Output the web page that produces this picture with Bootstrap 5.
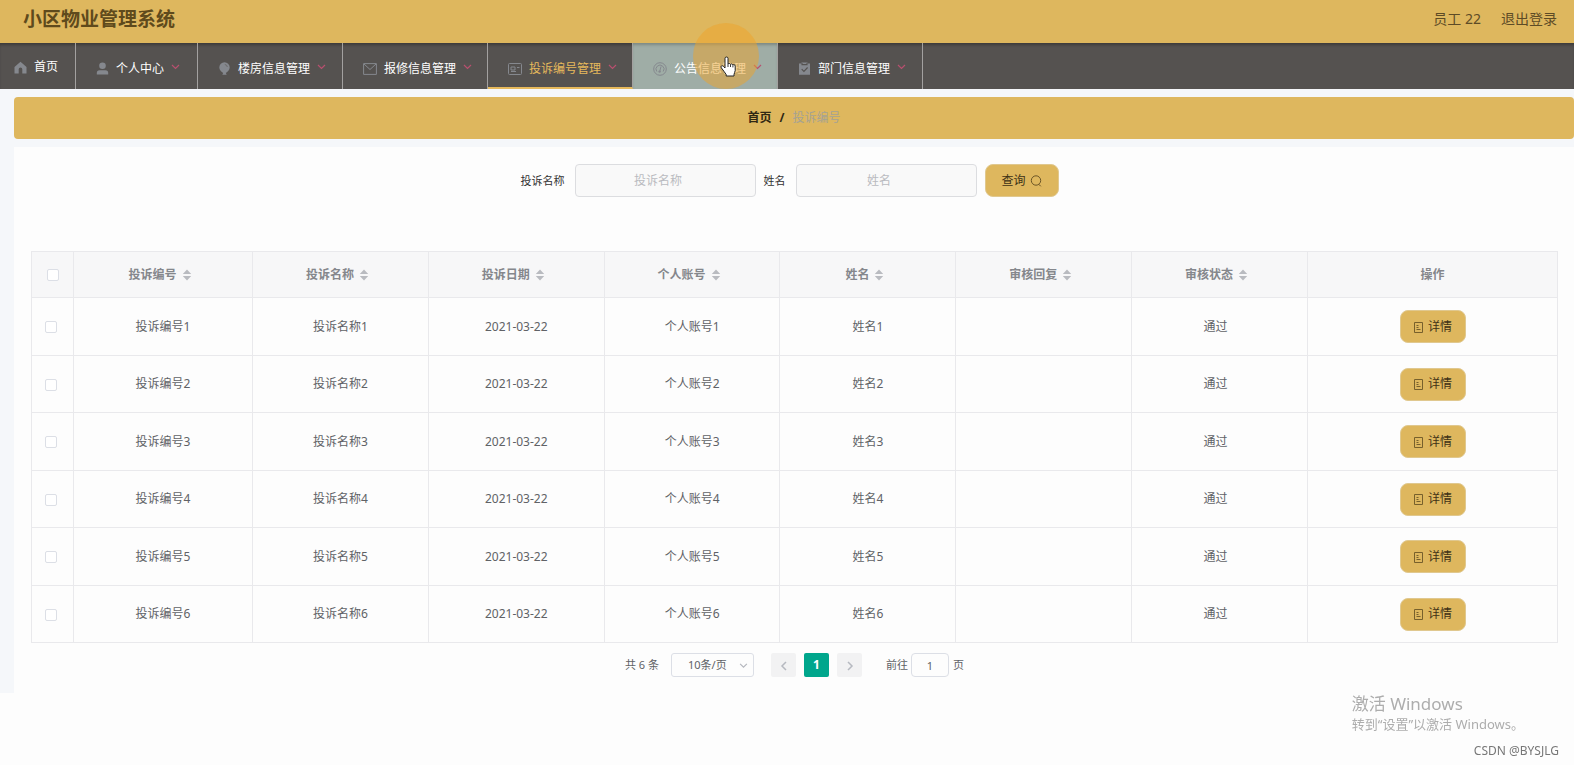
<!DOCTYPE html>
<html lang="zh-CN">
<head>
<meta charset="utf-8">
<meta name="viewport" content="width=device-width, initial-scale=1">
<title>小区物业管理系统</title>
<link rel="stylesheet" href="https://cdn.jsdelivr.net/npm/bootstrap@5.3.0/dist/css/bootstrap.min.css">
<style>
  :root { --gold: #deb75e; --slate: #555250; --line: #e9e9ec; }
  body { font-family: "Noto Sans", "Noto Sans CJK SC", sans-serif; font-size: 12px; line-height: 18px; color: #606266; background: #fdfdfd; }
  a { text-decoration: none; }
  .topbar { height: 43px; padding: 0 17px 5px 23px; background: var(--gold); }
  .brand-title { font-size: 19px; line-height: 28px; font-weight: 700; color: #5f4a1c; }
  .top-link { font-size: 14px; color: #5d4b26; }
  .main-menu { height: 46px; background: var(--slate); box-shadow: inset 0 3px 3px -1px #3d3b3a; }
  .menu-item { width: 145px; padding: 5px 17px 0 20px; color: #fff; border-right: 1px solid #a3a1a0; white-space: nowrap; }
  .menu-item span { margin-left: 7px; }
  .menu-item .caret { margin: 0 0 3px 7px; }
  .menu-item.home { width: 76px; padding: 2px 0 0 14px; }
  .menu-item.person { width: 122px; }
  .menu-item.current { color: #e6b95c; border-bottom: 2px solid #e6b95c; padding-top: 7px; }
  .menu-item.hovered { background: #9fada6; box-shadow: inset 0 3px 3px -1px #7d8983; }
  .menu-item svg { flex: none; }
  .click-halo { width: 66px; height: 66px; left: 60px; top: -20px; border-radius: 50%; background: rgba(238, 164, 42, .5); pointer-events: none; }
  .hand { left: 87px; top: 13px; }
  .page-area { background: #f5f7fa; padding: 8px 0 0 14px; }
  .crumb-bar { height: 42px; border-radius: 4px; background: var(--gold); }
  .crumb-home { color: #302713; font-weight: 700; }
  .crumb-here { color: #a5a294; }
  .panel { background: #fdfdfd; margin-top: 8px; padding: 17px 16px 16px 17px; }
  .search-row { height: 33px; margin-bottom: 54px; padding-right: 10px; }
  .search-row label { font-size: 11px; color: #333; }
  .search-row .form-control { width: 181px; height: 33px; font-size: 12px; text-align: center; background: #f9f9f9; border: 1px solid #dcdde0; border-radius: 4px; padding: 0 29px 0 15px; margin: 0 8px 0 10px; }
  .form-control::placeholder { color: #b9bbc0; opacity: 1; }
  .btn-gold { height: 33px; font-size: 12px; line-height: 18px; padding: 0 12px; border: 1px solid #e0c88f; border-radius: 8px; background: var(--gold); color: #3f3216; }
  .btn-gold:hover { background: #d3aa4d; border-color: #d3aa4d; }
  .btn-query { width: 74px; }
  .btn-detail { width: 66px; padding: 0; }
  .data-grid { table-layout: fixed; border: 1px solid var(--line); margin: 0; text-align: center; --bs-table-bg: transparent; --bs-table-color: #606266; color: #606266; }
  .data-grid > :not(caption) > * { border-width: 0; }
  .data-grid > :not(caption) > * > * { border: 1px solid var(--line); padding: 0; vertical-align: middle; }
  .data-grid thead th { height: 46px; background: #f7f7f8; color: #85878c; font-weight: 700; }
  .data-grid thead .sortable { padding-right: 6px; }
  .data-grid tbody .state { padding-right: 8px; }
  .data-grid tbody tr { height: 58px; }
  .data-grid tbody tr:nth-child(even) { height: 57px; }
  .col-tick { width: 42px; }
  .col-id { width: 179px; }
  .col-act { width: 250px; }
  .data-grid .form-check-input { width: 12px; height: 12px; margin: 0 3px 0 0; border: 1px solid #dcdfe6; border-radius: 2px; vertical-align: middle; }
  .data-grid th .form-check-input { margin: 0; }
  .sorter { margin-left: 5px; vertical-align: -2px; }
  .pager { margin-top: 10px; font-size: 11px; height: 24px; }
  .pager .form-select { width: 83px; height: 24px; font-size: 11px; line-height: 16px; padding: 0 20px 0 16px; border: 1px solid #dcdfe6; border-radius: 3px; color: #606266; background-color: transparent; background-position: right 5px center; background-size: 9px; margin: 0 17px 0 12px;
    background-image: url("data:image/svg+xml,%3csvg xmlns='http://www.w3.org/2000/svg' viewBox='0 0 16 16'%3e%3cpath fill='none' stroke='%23b4b7be' stroke-width='2' d='m2 5 6 6 6-6'/%3e%3c/svg%3e"); }
  .page-btn { width: 25px; height: 24px; padding: 0; border: 0; border-radius: 2px; background: #f2f2f3; color: #b6b9c0; font-size: 12px; font-weight: 700; line-height: 24px; }
  .page-btn.on { background: #00a68c; color: #fff; margin: 0 8px; }
  .pager .form-control { width: 38px; height: 24px; padding: 0; text-align: center; font-size: 11px; border: 1px solid #dcdfe6; border-radius: 4px; color: #606266; background: transparent; margin: 0 4px 0 3px; }
  .jump { margin-left: 24px; }
  .os-note { right: 50px; bottom: 31px; color: #adadad; font-size: 13px; line-height: 20px; pointer-events: none; }
  .os-note .title-line { font-size: 17px; }
  .credit { right: 15px; bottom: 5px; color: #777; font-size: 12px; }
</style>
</head>
<body>
<svg class="d-none" xmlns="http://www.w3.org/2000/svg">
  <symbol id="caret" viewBox="0 0 9 6"><path d="m1 1 3.500 3.500L8 1" fill="none" stroke="#b8506f" stroke-width="1.200"/></symbol>
  <symbol id="sort" viewBox="0 0 10 12"><path d="M5 .5 9.200 5H.8zM5 11.500.8 7h8.400z" fill="#b9bbc0"/></symbol>
  <symbol id="doc" viewBox="0 0 11 11"><path d="M1.500.5h8v10h-8zM3.500 3.500h2M3.500 5.500h2M3.500 7.500h4" fill="none" stroke="#77602c" stroke-width="1"/></symbol>
</svg>

<header class="topbar d-flex align-items-center justify-content-between">
  <h1 class="brand-title m-0">小区物业管理系统</h1>
  <div class="d-flex gap-3">
    <span class="top-link me-1">员工 22</span>
    <a class="top-link" href="#">退出登录</a>
  </div>
</header>

<nav class="main-menu d-flex">
  <a class="menu-item home d-flex align-items-center" href="#"><svg width="13" height="13" viewBox="0 0 13 13"><path d="M6.500.8 12.500 6v6.500H8.300V8.300a1.800 1.800 0 0 0-3.600 0v4.200H.5V6z" fill="#85888e"/></svg><span>首页</span></a>
  <a class="menu-item person d-flex align-items-center" href="#"><svg width="13" height="13" viewBox="0 0 13 13"><circle cx="6.500" cy="3.700" r="3.300" fill="#85888e"/><path d="M.8 12.500V11q0-2.800 2.800-2.800h5.800q2.800 0 2.800 2.800v1.500z" fill="#85888e"/></svg><span>个人中心</span><svg class="caret" width="9" height="6"><use href="#caret"/></svg></a>
  <a class="menu-item d-flex align-items-center" href="#"><svg width="13" height="13" viewBox="0 0 13 13"><path d="M6.500.3A5.200 5.200 0 0 1 11.700 5.500C11.700 8 9.500 10 7.800 11l.9 1.700H4.300L5.200 11C3.500 10 1.300 8 1.300 5.500A5.200 5.200 0 0 1 6.500.3z" fill="#85888e"/><path d="M6.800 2.500q2.300.2 2.500 2.500" fill="none" stroke="#6b6a6a"/></svg><span>楼房信息管理</span><svg class="caret" width="9" height="6"><use href="#caret"/></svg></a>
  <a class="menu-item d-flex align-items-center" href="#"><svg width="14" height="12" viewBox="0 0 14 12"><path d="M.6.600h12.800v10.800H.6zM1 1l6 5.500L13 1" fill="none" stroke="#85888e"/></svg><span>报修信息管理</span><svg class="caret" width="9" height="6"><use href="#caret"/></svg></a>
  <a class="menu-item current d-flex align-items-center" href="#"><svg width="14" height="12" viewBox="0 0 14 12"><rect x=".5" y=".5" width="13" height="11" rx="1" fill="none" stroke="#85888e"/><path d="M3 4h4v3H3zM9 4.500h2.500M3 8.500h5" fill="none" stroke="#85888e"/></svg><span>投诉编号管理</span><svg class="caret" width="9" height="6"><use href="#caret"/></svg></a>
  <a class="menu-item hovered position-relative d-flex align-items-center" href="#"><svg width="14" height="14" viewBox="0 0 14 14"><circle cx="7" cy="7" r="6.300" fill="none" stroke="#85888e"/><path d="M3.800 9.500a4 4 0 1 1 6.400 0M6.700 9.500 8 4.500" fill="none" stroke="#85888e"/><circle cx="6.600" cy="9.600" r="1.200" fill="#85888e"/></svg><span>公告信息管理</span><svg class="caret" width="9" height="6"><use href="#caret"/></svg>
    <i class="click-halo position-absolute"></i>
    <svg class="hand position-absolute" width="17" height="21" viewBox="0 0 17 21"><path d="M5 2.500a1.500 1.500 0 0 1 3 0V8c.4-.8 2.300-.7 2.500.4.500-.9 2.200-.6 2.400.6.600-.7 2.300-.4 2.300 1.200v4.300c0 1.500-1.200 2.500-1.200 4V20H6.200v-1.500C5 16.500 3 14.200 1.300 11.800.3 10.200 2 9 3.300 10.300L5 12z" fill="#fff" stroke="#222" stroke-width="1" stroke-linejoin="round"/><path d="M8 8v3M10.500 8.500V11M12.900 9.200v2.200" stroke="#222" stroke-width=".9"/></svg>
  </a>
  <a class="menu-item d-flex align-items-center" href="#"><svg width="13" height="13" viewBox="0 0 13 13"><path d="M1 1.500h2.500V.5h6v1H12v11.300H1z" fill="#85888e"/><path d="M4 .9v1.700h5V.9M3.700 7.200l2.200 2.200 3.700-3.900" fill="none" stroke="#555250" stroke-width="1.100"/></svg><span>部门信息管理</span><svg class="caret" width="9" height="6"><use href="#caret"/></svg></a>
</nav>

<main class="page-area">
  <nav class="crumb-bar d-flex align-items-center justify-content-center gap-2">
    <a class="crumb-home" href="#">首页</a><span class="crumb-home">/</span><span class="crumb-here">投诉编号</span>
  </nav>

  <section class="panel">
    <form class="search-row d-flex align-items-center justify-content-center">
      <label for="q-title">投诉名称</label>
      <input id="q-title" class="form-control" type="text" placeholder="投诉名称">
      <label for="q-name">姓名</label>
      <input id="q-name" class="form-control" type="text" placeholder="姓名">
      <button type="button" class="btn btn-gold btn-query d-flex align-items-center justify-content-center gap-1">查询<svg width="12" height="12" viewBox="0 0 12 12"><circle cx="6" cy="5.500" r="4.700" fill="none" stroke="#6b5526"/><path d="m8.800 9.300 2 2" stroke="#6b5526"/></svg></button>
    </form>

    <table class="table data-grid w-100">
      <colgroup><col class="col-tick"><col class="col-id"><col><col><col><col><col><col><col class="col-act"></colgroup>
      <thead><tr>
        <th><input class="form-check-input" type="checkbox" aria-label="全选"></th>
        <th class="sortable">投诉编号<svg class="sorter" width="10" height="12"><use href="#sort"/></svg></th>
        <th class="sortable">投诉名称<svg class="sorter" width="10" height="12"><use href="#sort"/></svg></th>
        <th class="sortable">投诉日期<svg class="sorter" width="10" height="12"><use href="#sort"/></svg></th>
        <th class="sortable">个人账号<svg class="sorter" width="10" height="12"><use href="#sort"/></svg></th>
        <th class="sortable">姓名<svg class="sorter" width="10" height="12"><use href="#sort"/></svg></th>
        <th class="sortable">审核回复<svg class="sorter" width="10" height="12"><use href="#sort"/></svg></th>
        <th class="sortable">审核状态<svg class="sorter" width="10" height="12"><use href="#sort"/></svg></th>
        <th>操作</th>
      </tr></thead>
      <tbody>
        <tr><td><input class="form-check-input" type="checkbox" aria-label="选择1"></td><td>投诉编号1</td><td>投诉名称1</td><td>2021-03-22</td><td>个人账号1</td><td>姓名1</td><td></td><td class="state">通过</td><td><button type="button" class="btn btn-gold btn-detail"><svg class="me-1" width="11" height="11"><use href="#doc"/></svg>详情</button></td></tr>
        <tr><td><input class="form-check-input" type="checkbox" aria-label="选择2"></td><td>投诉编号2</td><td>投诉名称2</td><td>2021-03-22</td><td>个人账号2</td><td>姓名2</td><td></td><td class="state">通过</td><td><button type="button" class="btn btn-gold btn-detail"><svg class="me-1" width="11" height="11"><use href="#doc"/></svg>详情</button></td></tr>
        <tr><td><input class="form-check-input" type="checkbox" aria-label="选择3"></td><td>投诉编号3</td><td>投诉名称3</td><td>2021-03-22</td><td>个人账号3</td><td>姓名3</td><td></td><td class="state">通过</td><td><button type="button" class="btn btn-gold btn-detail"><svg class="me-1" width="11" height="11"><use href="#doc"/></svg>详情</button></td></tr>
        <tr><td><input class="form-check-input" type="checkbox" aria-label="选择4"></td><td>投诉编号4</td><td>投诉名称4</td><td>2021-03-22</td><td>个人账号4</td><td>姓名4</td><td></td><td class="state">通过</td><td><button type="button" class="btn btn-gold btn-detail"><svg class="me-1" width="11" height="11"><use href="#doc"/></svg>详情</button></td></tr>
        <tr><td><input class="form-check-input" type="checkbox" aria-label="选择5"></td><td>投诉编号5</td><td>投诉名称5</td><td>2021-03-22</td><td>个人账号5</td><td>姓名5</td><td></td><td class="state">通过</td><td><button type="button" class="btn btn-gold btn-detail"><svg class="me-1" width="11" height="11"><use href="#doc"/></svg>详情</button></td></tr>
        <tr><td><input class="form-check-input" type="checkbox" aria-label="选择6"></td><td>投诉编号6</td><td>投诉名称6</td><td>2021-03-22</td><td>个人账号6</td><td>姓名6</td><td></td><td class="state">通过</td><td><button type="button" class="btn btn-gold btn-detail"><svg class="me-1" width="11" height="11"><use href="#doc"/></svg>详情</button></td></tr>
      </tbody>
    </table>

    <div class="pager d-flex align-items-center justify-content-center">
      <span>共 6 条</span>
      <select class="form-select" aria-label="每页条数"><option>10条/页</option><option>20条/页</option></select>
      <button type="button" class="page-btn" aria-label="上一页"><svg width="8" height="10" viewBox="0 0 8 10"><path d="M6 1 2 5l4 4" fill="none" stroke="#b6b9c0" stroke-width="1.500"/></svg></button>
      <button type="button" class="page-btn on">1</button>
      <button type="button" class="page-btn" aria-label="下一页"><svg width="8" height="10" viewBox="0 0 8 10"><path d="m2 1 4 4-4 4" fill="none" stroke="#b6b9c0" stroke-width="1.500"/></svg></button>
      <label class="jump" for="goto">前往</label><input id="goto" class="form-control" type="text" value="1"><span>页</span>
    </div>
  </section>
</main>

<aside class="os-note position-fixed"><div class="title-line">激活 Windows</div><div>转到“设置”以激活 Windows。</div></aside>
<div class="credit position-fixed">CSDN @BYSJLG</div>
<script src="https://cdn.jsdelivr.net/npm/bootstrap@5.3.0/dist/js/bootstrap.bundle.min.js"></script>
</body>
</html>
